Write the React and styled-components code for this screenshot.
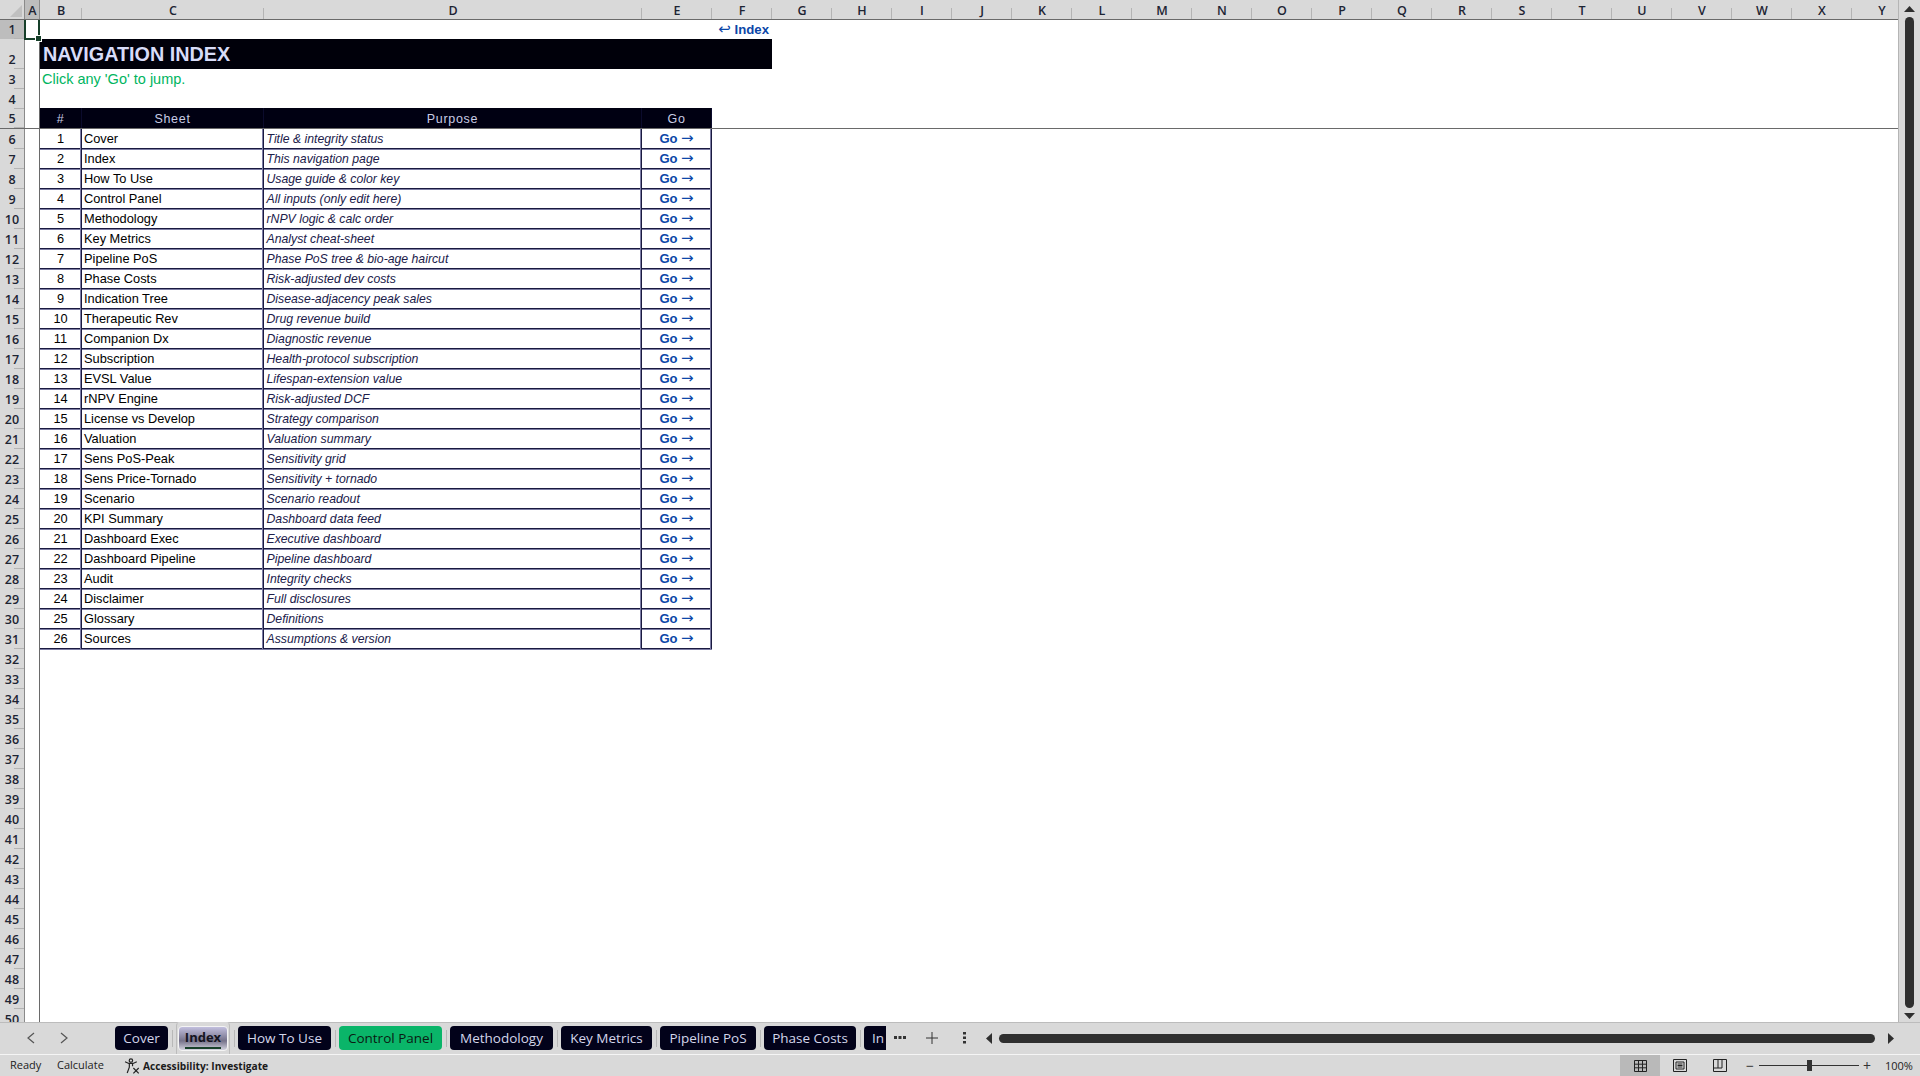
import React from 'react'
import styled, { createGlobalStyle } from 'styled-components'

const GlobalStyle = createGlobalStyle`
  html, body {
    margin: 0;
    padding: 0;
    height: 100%;
    overflow: hidden;
    background: #fff;
  }
`

const uiFont = '"Open Sans", "Noto Sans", sans-serif'
const cellFont = '"Liberation Sans", Arial, sans-serif'
const chrome = '#d9d9d9'
const gridLine = '#1a1a40'
const gridShade = '#7c7ca4'

const Window = styled.div`
  display: flex;
  flex-direction: column;
  width: 1920px;
  height: 1076px;
  overflow: hidden;
  background: ${chrome};
`

const Main = styled.div`
  display: flex;
  height: 1022px;
`

const SheetArea = styled.div`
  display: flex;
  flex-direction: column;
  width: 1899px;
  overflow: hidden;
  border-right: 1px solid #b5b5b5;
  box-sizing: border-box;
`

const ColumnBar = styled.div`
  display: flex;
  flex: none;
  height: 20px;
  box-sizing: border-box;
  border-bottom: 1px solid #6a6a6a;
  background: ${chrome};
  overflow: hidden;
`

const Corner = styled.div`
  flex: none;
  width: 25px;
  box-sizing: border-box;
  border-right: 1px solid #8a8a8a;
  display: flex;
  align-items: flex-end;
  justify-content: flex-end;
  padding: 0 2px 2px 0;

  &::before {
    content: '';
    width: 12px;
    height: 12px;
    background: #c0c0c0;
    clip-path: polygon(100% 0, 100% 100%, 0 100%);
  }
`

const ColLabel = styled.div`
  flex: none;
  position: relative;
  width: ${p => p.$w}px;
  box-sizing: border-box;
  text-align: center;
  font: 600 12.5px/21px ${uiFont};
  color: #1d2433;
  background: ${p => (p.$active ? '#bdbdbd' : 'transparent')};

  &::after {
    content: '';
    position: absolute;
    right: 0;
    bottom: 0;
    width: 1px;
    height: ${p => (p.$active ? 19 : 11)}px;
    background: ${p => (p.$active ? '#8a8a8a' : '#b4b4b4')};
  }
`

const Pane = styled.div`
  display: flex;
  flex: ${p => (p.$frozen ? 'none' : '1')};
  min-height: 0;
  overflow: hidden;
  box-sizing: border-box;
  height: ${p => (p.$frozen ? '109px' : 'auto')};
  border-bottom: ${p => (p.$frozen ? '1px solid #6a6a6a' : 'none')};
  background: #fff;
`

const RowHeaders = styled.div`
  flex: none;
  width: 25px;
  box-sizing: border-box;
  border-right: 1px solid #8a8a8a;
  background: ${chrome};
`

const RowLabel = styled.div`
  position: relative;
  height: ${p => p.$h}px;
  box-sizing: border-box;
  display: flex;
  align-items: flex-end;
  justify-content: center;
  font: 600 12.5px/18px ${uiFont};
  color: #1d2433;
  background: ${p => (p.$active ? '#bdbdbd' : 'transparent')};

  &::after {
    content: '';
    position: absolute;
    right: 0;
    bottom: 0;
    width: 10px;
    height: 1px;
    background: #b4b4b4;
  }
`

const Gutter = styled.div`
  position: relative;
  flex: none;
  width: 15px;
  box-sizing: border-box;
  border-right: 1px solid #6a6a6a;
`

const SelectedCell = styled.div`
  position: absolute;
  top: -2px;
  left: -1px;
  width: 16px;
  height: 22px;
  box-sizing: border-box;
  border: 2px solid #17402a;

  &::after {
    content: '';
    position: absolute;
    right: -4px;
    bottom: -4px;
    width: 5px;
    height: 5px;
    background: #17402a;
    border: 1px solid #fff;
    box-sizing: content-box;
  }
`

const FrozenCells = styled.div`
  width: 732px;
`

const IndexRow = styled.div`
  height: 19px;
  padding-right: 3px;
  text-align: right;
  font: 700 13.2px/19px ${cellFont};
  color: #0b46a8;
`

const Arrow = styled.span`
  font-family: "DejaVu Sans", sans-serif;
  font-weight: 400;
  font-size: 15px;
  line-height: 1;
`

const TitleBar = styled.div`
  height: 30px;
  padding-left: 3px;
  background: #00000a;
  color: #d8dcf8;
  font: 700 19.8px/30px ${cellFont};
`

const Hint = styled.div`
  height: 20px;
  padding-left: 2px;
  color: #00b560;
  font: 400 14.5px/20px ${cellFont};
`

const Spacer = styled.div`
  height: 19px;
`

const TableHead = styled.div`
  display: grid;
  grid-template-columns: 42px 182px 378px 70px;
  width: 672px;
  height: 20px;
  background: #000012;
  color: #c8cce4;
  font: 400 12.5px/22px ${cellFont};
  letter-spacing: 0.7px;
  text-align: center;
`

const HeadCell = styled.div`
  border-right: 1px solid #0b0b2c;
`

const Table = styled.div`
  width: 672px;
  align-self: flex-start;
`

const TableRow = styled.div`
  display: grid;
  grid-template-columns: 42px 182px 378px 70px;
  height: 20px;
  box-sizing: border-box;
  border-bottom: 1px solid ${gridLine};
  box-shadow: 0 1px 0 ${gridShade};
  font: 400 12.8px/20px ${cellFont};
  color: #000;
`

const Cell = styled.div`
  border-right: 1px solid ${gridLine};
  box-shadow: inset -1px 0 0 ${gridShade};
`

const Num = styled(Cell)`
  text-align: center;
`

const SheetName = styled(Cell)`
  padding-left: 2px;
`

const Purpose = styled(Cell)`
  padding-left: 2.5px;
  font-size: 12.25px;
  font-style: italic;
  color: #20204a;
`

const GoLink = styled(Cell)`
  text-align: center;
  font-weight: 700;
  font-size: 13px;
  line-height: 19px;
  color: #0b46a8;
`

const VScroll = styled.div`
  flex: none;
  width: 21px;
  display: flex;
  flex-direction: column;
  align-items: center;
  background: ${chrome};
  padding: 5px 0 2px;
  box-sizing: border-box;
`

const VThumb = styled.div`
  flex: 1;
  width: 9px;
  margin: 4px 0;
  border-radius: 5px;
  background: #2f2f2f;
`

const TabBar = styled.div`
  display: flex;
  align-items: center;
  flex: none;
  height: 32px;
  padding-bottom: 1px;
  box-sizing: border-box;
  border-top: 1px solid #bcbcbc;
  background: ${chrome};
`

const NavArrows = styled.div`
  display: flex;
  flex: none;
  width: 115px;
  gap: 23px;
  padding-left: 26px;
  box-sizing: border-box;
  color: #555;
`

const TabStrip = styled.div`
  display: flex;
  align-items: center;
  flex: none;
  gap: 3.5px;
  width: 770px;
  height: 100%;
`

const Tab = styled.div`
  flex: none;
  width: ${p => p.$w}px;
  height: 24px;
  box-sizing: border-box;
  border-radius: ${p => (p.$cut ? '4px 0 0 4px' : '4px')};
  padding-left: ${p => (p.$cut ? 8 : 0)}px;
  text-align: ${p => (p.$cut ? 'left' : 'center')};
  font: 400 13.5px/24px ${uiFont};
  background: ${p => (p.$green ? '#0ab569' : '#02021a')};
  color: ${p => (p.$green ? '#0a1a12' : '#d4d6ea')};
`

const ActiveSlot = styled.div`
  flex: none;
  display: flex;
  align-items: center;
  justify-content: center;
  width: 54px;
  height: 32px;
  margin-top: -1px;
  box-sizing: border-box;
  border: 1px solid #bcbcbc;
  border-top-color: ${chrome};
  border-bottom: none;
  border-radius: 4px 4px 0 0;
  background: ${chrome};
`

const ActiveTab = styled.div`
  width: 50px;
  height: 25px;
  box-sizing: border-box;
  border: 1px solid #f4f4f4;
  border-radius: 4px;
  text-align: center;
  font: 700 13px/20px ${uiFont};
  color: #14141f;
  background: linear-gradient(#c2bfde, #75728a 60%, #d2d2de);
  position: relative;

  &::after {
    content: '';
    position: absolute;
    left: 6px;
    right: 6px;
    bottom: 1px;
    height: 2px;
    background: #17402a;
  }
`

const TabSep = styled.div`
  flex: none;
  width: 1px;
  height: 17px;
  background: #b8b8b8;
`

const BarControls = styled.div`
  display: flex;
  align-items: center;
  flex: 1;
  min-width: 0;
`

const ControlSlot = styled.div`
  display: flex;
  justify-content: center;
  align-items: center;
  flex: none;
  width: ${p => p.$w}px;
  color: #333;
`

const HThumb = styled.div`
  flex: none;
  width: 876px;
  height: 9px;
  margin-right: 12px;
  border-radius: 5px;
  background: #2f2f2f;
`

const StatusBar = styled.div`
  display: flex;
  align-items: stretch;
  flex: none;
  height: 22px;
  box-sizing: border-box;
  border-top: 1px solid #f5f5f5;
  background: ${chrome};
  font: 400 11px/20px ${uiFont};
  color: #222;
`

const StatusText = styled.div`
  flex: none;
  width: ${p => p.$w}px;
  padding-left: ${p => p.$pad || 0}px;
  box-sizing: border-box;
`

const AccessNote = styled.div`
  display: flex;
  align-items: center;
  gap: 3px;
  flex: 1;
  font-weight: 700;
  font-size: 10.2px;
  color: #1b1b1b;
`

const ViewButton = styled.div`
  display: flex;
  align-items: center;
  justify-content: center;
  flex: none;
  width: 40px;
  background: ${p => (p.$active ? '#b9b9b9' : 'transparent')};
`

const ZoomGroup = styled.div`
  display: flex;
  align-items: center;
  flex: none;
  width: 180px;
  padding-left: 3px;
  box-sizing: border-box;
`

const ZoomSign = styled.div`
  flex: none;
  width: 14px;
  text-align: center;
  font-size: 14px;
  color: #333;
`

const Slider = styled.div`
  position: relative;
  flex: none;
  width: 100px;
  height: 1px;
  margin: 0 1px 0 2px;
  background: #333;
`

const SliderThumb = styled.div`
  position: absolute;
  left: 48px;
  top: -5px;
  width: 5px;
  height: 11px;
  background: #333;
`

const ZoomValue = styled.div`
  margin-left: 11px;
`

const Triangle = ({ dir }) => {
  const points = {
    up: '0,7 5.5,1 11,7',
    down: '0,1 5.5,7 11,1',
    left: '7,0 1,5.5 7,11',
    right: '1,0 7,5.5 1,11',
  }
  const vertical = dir === 'up' || dir === 'down'
  return (
    <svg width={vertical ? 11 : 8} height={vertical ? 8 : 11} fill="#2f2f2f">
      <polygon points={points[dir]} />
    </svg>
  )
}

const Chevron = ({ flip }) => (
  <svg width="10" height="14" fill="none" stroke="#555" strokeWidth="1.2">
    <path d={flip ? 'M2 2l6 5-6 5' : 'M8 2L2 7l6 5'} />
  </svg>
)

const AccessIcon = () => (
  <svg width="16" height="16" viewBox="0 0 15 15" fill="none" stroke="#222" strokeWidth="1.1">
    <circle cx="6.5" cy="2.4" r="1.6" />
    <path d="M1 3.5l3.5 1.6h4L12 3.5M5 5.2v3.4L3 14M8 5.2v2.5" />
    <path d="M8.8 9.4l5 5M13.8 9.4l-5 5" />
  </svg>
)

const NormalIcon = () => (
  <svg width="13" height="12" fill="none" stroke="#222" strokeWidth="1">
    <path d="M.5.5h12v11H.5zM.5 4.2h12M.5 7.8h12M4.5.5v11M8.5.5v11" />
  </svg>
)

const LayoutIcon = () => (
  <svg width="14" height="13" fill="none" stroke="#222" strokeWidth="1">
    <path d="M.5.5h13v12H.5zM3 3h8v7H3zM4.5 5h5M4.5 6.5h5M4.5 8h5" />
  </svg>
)

const BreakIcon = () => (
  <svg width="14" height="13" fill="none" stroke="#222" strokeWidth="1">
    <path d="M.5.5h13v12H.5zM.5 9h8.5V.5M5 .5V9" />
  </svg>
)

const columns = [
  ['A', 15, true], ['B', 42], ['C', 182], ['D', 378], ['E', 70],
  ...'FGHIJKLMNOPQRSTUVWXY'.split('').map(l => [l, 60]),
]

const sheets = [
  ['Cover', 'Title & integrity status'],
  ['Index', 'This navigation page'],
  ['How To Use', 'Usage guide & color key'],
  ['Control Panel', 'All inputs (only edit here)'],
  ['Methodology', 'rNPV logic & calc order'],
  ['Key Metrics', 'Analyst cheat-sheet'],
  ['Pipeline PoS', 'Phase PoS tree & bio-age haircut'],
  ['Phase Costs', 'Risk-adjusted dev costs'],
  ['Indication Tree', 'Disease-adjacency peak sales'],
  ['Therapeutic Rev', 'Drug revenue build'],
  ['Companion Dx', 'Diagnostic revenue'],
  ['Subscription', 'Health-protocol subscription'],
  ['EVSL Value', 'Lifespan-extension value'],
  ['rNPV Engine', 'Risk-adjusted DCF'],
  ['License vs Develop', 'Strategy comparison'],
  ['Valuation', 'Valuation summary'],
  ['Sens PoS-Peak', 'Sensitivity grid'],
  ['Sens Price-Tornado', 'Sensitivity + tornado'],
  ['Scenario', 'Scenario readout'],
  ['KPI Summary', 'Dashboard data feed'],
  ['Dashboard Exec', 'Executive dashboard'],
  ['Dashboard Pipeline', 'Pipeline dashboard'],
  ['Audit', 'Integrity checks'],
  ['Disclaimer', 'Full disclosures'],
  ['Glossary', 'Definitions'],
  ['Sources', 'Assumptions & version'],
]

const frozenRows = [[1, 19, true], [2, 30], [3, 20], [4, 20], [5, 19]]
const lowerRows = Array.from({ length: 45 }, (_, i) => i + 6)

const tabs = [
  { name: 'Cover', w: 53 },
  { name: 'Index', active: true },
  { name: 'How To Use', w: 93 },
  { name: 'Control Panel', w: 103, green: true },
  { name: 'Methodology', w: 103 },
  { name: 'Key Metrics', w: 91 },
  { name: 'Pipeline PoS', w: 96 },
  { name: 'Phase Costs', w: 92 },
  { name: 'In', w: 22, cut: true },
]

const App = () => (
  <Window>
    <GlobalStyle />
    <Main>
      <SheetArea>
        <ColumnBar>
          <Corner />
          {columns.map(([label, w, active]) => (
            <ColLabel key={label} $w={w} $active={active}>{label}</ColLabel>
          ))}
        </ColumnBar>
        <Pane $frozen>
          <RowHeaders>
            {frozenRows.map(([n, h, active]) => (
              <RowLabel key={n} $h={h} $active={active}>{n}</RowLabel>
            ))}
          </RowHeaders>
          <Gutter><SelectedCell /></Gutter>
          <FrozenCells>
            <IndexRow><Arrow>↩</Arrow> Index</IndexRow>
            <TitleBar>NAVIGATION INDEX</TitleBar>
            <Hint>Click any 'Go' to jump.</Hint>
            <Spacer />
            <TableHead>
              <HeadCell>#</HeadCell>
              <HeadCell>Sheet</HeadCell>
              <HeadCell>Purpose</HeadCell>
              <HeadCell>Go</HeadCell>
            </TableHead>
          </FrozenCells>
        </Pane>
        <Pane>
          <RowHeaders>
            {lowerRows.map(n => (
              <RowLabel key={n} $h={20}>{n}</RowLabel>
            ))}
          </RowHeaders>
          <Gutter />
          <Table>
            {sheets.map(([name, purpose], i) => (
              <TableRow key={name}>
                <Num>{i + 1}</Num>
                <SheetName>{name}</SheetName>
                <Purpose>{purpose}</Purpose>
                <GoLink>Go <Arrow>→</Arrow></GoLink>
              </TableRow>
            ))}
          </Table>
        </Pane>
      </SheetArea>
      <VScroll>
        <Triangle dir="up" />
        <VThumb />
        <Triangle dir="down" />
      </VScroll>
    </Main>
    <TabBar>
      <NavArrows>
        <Chevron />
        <Chevron flip />
      </NavArrows>
      <TabStrip>
        {tabs.map((tab, i) => (
          <React.Fragment key={tab.name}>
            {i > 0 && <TabSep />}
            {tab.active ? (
              <ActiveSlot><ActiveTab>{tab.name}</ActiveTab></ActiveSlot>
            ) : (
              <Tab $w={tab.w} $green={tab.green} $cut={tab.cut}>{tab.name}</Tab>
            )}
          </React.Fragment>
        ))}
      </TabStrip>
      <BarControls>
        <ControlSlot $w={30}>
          <svg width="12" height="4" fill="#333"><path d="M0 0h3v3H0zM4.5 0h3v3h-3zM9 0h3v3H9z" /></svg>
        </ControlSlot>
        <ControlSlot $w={34}>
          <svg width="12" height="12" stroke="#333" strokeWidth="1"><path d="M6 0v12M0 6h12" /></svg>
        </ControlSlot>
        <ControlSlot $w={30}>
          <svg width="3" height="12" fill="#333"><path d="M0 0h3v2.5H0zM0 4.5h3V7H0zM0 9h3v2.5H0z" /></svg>
        </ControlSlot>
        <ControlSlot $w={20}><Triangle dir="left" /></ControlSlot>
        <HThumb />
        <Triangle dir="right" />
      </BarControls>
    </TabBar>
    <StatusBar>
      <StatusText $w={57} $pad={10}>Ready</StatusText>
      <StatusText $w={67}>Calculate</StatusText>
      <AccessNote><AccessIcon />Accessibility: Investigate</AccessNote>
      <ViewButton $active><NormalIcon /></ViewButton>
      <ViewButton><LayoutIcon /></ViewButton>
      <ViewButton><BreakIcon /></ViewButton>
      <ZoomGroup>
        <ZoomSign>−</ZoomSign>
        <Slider><SliderThumb /></Slider>
        <ZoomSign>+</ZoomSign>
        <ZoomValue>100%</ZoomValue>
      </ZoomGroup>
    </StatusBar>
  </Window>
)

export default App
